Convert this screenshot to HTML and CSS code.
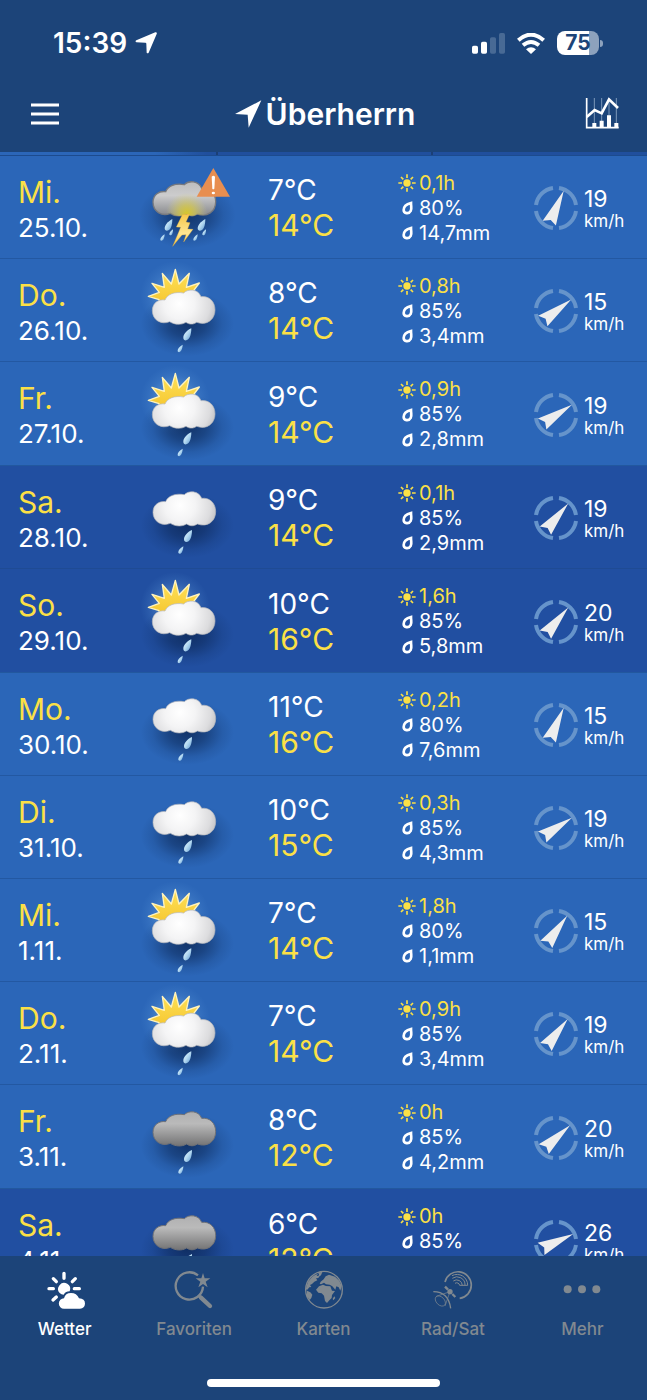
FILE: index.html
```html
<!DOCTYPE html>
<html lang="de">
<head>
    <meta charset="utf-8">
    <meta name="viewport" content="width=device-width, initial-scale=1">
    <title>Wetter Überherrn</title>
    <link rel="stylesheet" href="styles.css">
</head>
<body>
    <!-- shared icon shapes -->
    <svg class="defs" aria-hidden="true">
        <defs>
            <radialGradient id="cloudLight" gradientUnits="userSpaceOnUse" cx="150" cy="112" r="115">
                <stop offset="0" stop-color="#fff"/>
                <stop offset="0.4" stop-color="#f4f4f5"/>
                <stop offset="0.8" stop-color="#dcdcde"/>
                <stop offset="1" stop-color="#c0c0c3"/>
            </radialGradient>
            <linearGradient id="cloudDark" x1="0" y1="0" x2="0" y2="1">
                <stop offset="0" stop-color="#b0b0b1"/>
                <stop offset="0.35" stop-color="#bababa"/>
                <stop offset="1" stop-color="#737374"/>
            </linearGradient>
            <linearGradient id="cloudStorm" x1="0" y1="0" x2="0" y2="1">
                <stop offset="0" stop-color="#bdbdbd"/>
                <stop offset="0.4" stop-color="#cccccd"/>
                <stop offset="1" stop-color="#85868a"/>
            </linearGradient>
            <radialGradient id="flash" gradientUnits="userSpaceOnUse" cx="170" cy="166" r="62">
                <stop offset="0" stop-color="#d8c72c"/>
                <stop offset="0.4" stop-color="#d6c94a" stop-opacity="0.7"/>
                <stop offset="1" stop-color="#d6cf80" stop-opacity="0"/>
            </radialGradient>
            <radialGradient id="glow">
                <stop offset="0.4" stop-color="#8cc4f2" stop-opacity="0.4"/>
                <stop offset="0.7" stop-color="#6aa6e4" stop-opacity="0.18"/>
                <stop offset="1" stop-color="#5b9ade" stop-opacity="0"/>
            </radialGradient>
            <radialGradient id="shade">
                <stop offset="0" stop-color="#0a2450" stop-opacity="0.75"/>
                <stop offset="0.4" stop-color="#0a2450" stop-opacity="0.5"/>
                <stop offset="0.75" stop-color="#0a2450" stop-opacity="0.14"/>
                <stop offset="1" stop-color="#0a2450" stop-opacity="0"/>
            </radialGradient>
            <linearGradient id="sunFill" x1="0" y1="0" x2="0" y2="1">
                <stop offset="0" stop-color="#fde25a"/>
                <stop offset="1" stop-color="#f6c62f"/>
            </linearGradient>
            <linearGradient id="dropFill" x1="0" y1="0" x2="1" y2="1">
                <stop offset="0" stop-color="#eaf7ff"/>
                <stop offset="0.5" stop-color="#b4daf2"/>
                <stop offset="1" stop-color="#5d97cf"/>
            </linearGradient>
            <linearGradient id="boltFill" x1="0" y1="0" x2="0" y2="1">
                <stop offset="0" stop-color="#f6c648"/>
                <stop offset="0.6" stop-color="#ffe692"/>
                <stop offset="1" stop-color="#fcc437"/>
            </linearGradient>
        </defs>

        <symbol id="cloud" viewBox="0 0 360 300">
            <path d="M107 101C114 84 135 75 163 80C175 67 206 67 215 91C240 88 257 106 257 131C257 160 232 179 202 168C192 175 180 175 170 168C155 177 135 175 121 166C95 177 69 160 69 133C69 110 88 98 107 101Z"/>
        </symbol>
        <symbol id="rain" viewBox="0 0 360 300">
            <path d="M186 186C172 192 162 204 162 214C162 225 176 225 181 213C185 205 186 195 186 186Z" fill="url(#dropFill)"/>
            <path d="M160 235C150 240 145 248 145 253C145 259 153 259 156 252C159 247 160 240 160 235Z" fill="url(#dropFill)"/>
        </symbol>
        <symbol id="stormRain" viewBox="0 0 60 80">
            <path d="M38 3C24 11 15 22 15 31C15 41 28 40 33 30C37 22 38 12 38 3Z" fill="url(#dropFill)"/>
            <path d="M40 34C33 39 29 44 29 49C30 54 36 52 38 47C40 42 40 38 40 34Z" fill="url(#dropFill)"/>
            <path d="M15 49C7 54 2 60 2 65C3 70 9 68 12 63C14 58 15 53 15 49Z" fill="url(#dropFill)"/>
        </symbol>

        <symbol id="weather-rain" viewBox="0 0 360 300">
            <ellipse cx="172" cy="172" rx="140" ry="98" fill="url(#shade)"/>
            <use href="#cloud" fill="url(#cloudLight)" stroke="#b6b8bd" stroke-width="2"/>
            <use href="#rain"/>
        </symbol>
        <symbol id="weather-dark" viewBox="0 0 360 300">
            <ellipse cx="172" cy="172" rx="140" ry="98" fill="url(#shade)"/>
            <use href="#cloud" fill="url(#cloudDark)" stroke="#707277" stroke-width="3"/>
            <use href="#rain"/>
        </symbol>
        <symbol id="weather-sun" viewBox="0 0 360 300">
            <circle cx="135" cy="104" r="104" fill="url(#glow)"/>
            <ellipse cx="172" cy="188" rx="140" ry="98" fill="url(#shade)"/>
            <path d="M55 106L88 94L66 67L103 79L97 37L124 69L136 25L147 69L178 37L169 79L208 66L184 98L184 120L100 130L85 115Z" fill="url(#sunFill)" stroke="#fff3bd" stroke-width="4" stroke-linejoin="round"/>
            <g transform="translate(-2 16)">
                <use href="#cloud" fill="url(#cloudLight)" stroke="#b6b8bd" stroke-width="2"/>
                <use href="#rain"/>
            </g>
        </symbol>
        <symbol id="weather-storm" viewBox="0 0 360 300">
            <ellipse cx="172" cy="172" rx="145" ry="100" fill="url(#shade)"/>
            <use href="#cloud" fill="url(#cloudStorm)" stroke="#77797e" stroke-width="4"/>
            <use href="#cloud" fill="url(#flash)"/>
            <use href="#stormRain" x="89" y="180" width="60" height="80"/>
            <use href="#stormRain" x="188" y="180" width="60" height="80"/>
            <path d="M157 170L179 168L168 192L180 194L173 213L189 214L161 252L168 230L156 231L128 265L145 225L152 208L139 207Z" fill="url(#boltFill)" stroke="#e9b034" stroke-width="1"/>
            <path d="M250 30L300 116H200Z" fill="#e88e50"/>
            <path d="M245 56Q250 50 255 56L253 92Q250 95 247 92Z" fill="#fff"/>
            <ellipse cx="250" cy="105" rx="5" ry="4" fill="#fff"/>
        </symbol>

        <symbol id="sunshine" viewBox="0 0 54 54">
            <circle cx="27" cy="27" r="11" fill="currentColor"/>
            <path d="M27 1V12M27 42V53M1 27H12M42 27H53M9 9L16 16M38 38L45 45M45 9L38 16M16 38L9 45" stroke="currentColor" stroke-width="5"/>
        </symbol>
        <symbol id="drop" viewBox="0 0 54 54">
            <path d="M39 12C39 24 42 29 38 36C33 46 17 44 17 33C17 22 27 15 39 12Z" fill="none" stroke="currentColor" stroke-width="8"/>
        </symbol>
        <symbol id="ring" viewBox="-22 -22 44 44">
            <path d="M3 -20A20 20 0 0 1 20 -3M20 3A20 20 0 0 1 3 20M-3 20A20 20 0 0 1 -20 3M-20 -3A20 20 0 0 1 -3 -20" fill="none" stroke="#6694cb" stroke-width="4"/>
        </symbol>
    </svg>

    <header class="top">
        <div class="status">
            <span class="time">15:39
                <svg width="22" height="22" viewBox="0 0 66 66" aria-hidden="true"><path d="M61 1Q67 0 65 6L41 62Q38 66 35 62L34 35Q34 32 31 32L4 31Q-1 28 4 25Z" fill="#fff"/></svg>
            </span>
            <span class="signals">
                <svg width="33" height="21" viewBox="0 0 99 63" aria-hidden="true">
                    <rect x="0" y="38" width="18" height="24" rx="5" fill="#fff"/>
                    <rect x="27" y="26" width="18" height="36" rx="5" fill="#fff"/>
                    <rect x="54" y="13" width="18" height="49" rx="5" fill="#486a95"/>
                    <rect x="81" y="0" width="18" height="62" rx="5" fill="#486a95"/>
                </svg>
                <svg width="28" height="21" viewBox="0 0 84 63" aria-hidden="true">
                    <path d="M4 22Q42 -12 80 22M18 37Q42 17 66 37" fill="none" stroke="#fff" stroke-width="12"/>
                    <path d="M27 49Q42 37 57 49L42 63Z" fill="#fff"/>
                </svg>
                <span class="battery">75</span>
            </span>
        </div>
        <div class="titlebar">
            <button class="icon-button" type="button" aria-label="Menü">
                <svg width="28" height="22" viewBox="0 0 28 22"><path d="M0 2H28M0 11H28M0 20H28" stroke="#fff" stroke-width="3"/></svg>
            </button>
            <h1>
                <svg width="27" height="28" viewBox="0 0 81 84" aria-hidden="true"><path d="M79 1L41 83L38 44L0 42Z" fill="#fff"/></svg>
                Überherrn
            </h1>
            <button class="icon-button" type="button" aria-label="Diagramm">
                <svg width="34" height="34" viewBox="0 0 102 102">
                    <path d="M28 3V92M50 3V92M72 3V92M94 3V92" stroke="#7c98ba" stroke-width="3"/>
                    <path d="M5 3V92H101" fill="none" stroke="#fff" stroke-width="5"/>
                    <path d="M22 78H34V92H22ZM44 71H56V92H44ZM66 55H78V92H66ZM88 78H100V92H88Z" fill="#fff"/>
                    <path d="M5 60L29 39L50 49L72 7L99 33" fill="none" stroke="#fff" stroke-width="8"/>
                </svg>
            </button>
        </div>
    </header>

    <main class="forecast">
        <div class="previous"><span></span><span></span><span></span></div>
        <div id="days"></div>
    </main>

    <nav class="tabs">
        <ul>
            <li><a class="active" href="#wetter">
                <svg viewBox="0 0 120 120" aria-hidden="true">
                    <path d="M57 10V25M12 56H25M88 56H103M25 26L34 35M91 26L82 35M24 90L34 81" stroke="currentColor" stroke-width="10" stroke-linecap="round"/>
                    <path d="M44 69A18 18 0 1 1 74 64Q62 64 56 74Q49 74 44 69Z" fill="currentColor"/>
                    <path d="M57 116A15 15 0 0 1 57 85Q61 69 78 69Q95 69 102 85Q120 86 120 101Q119 115 105 116Z" fill="currentColor"/>
                </svg>
                Wetter</a></li>
            <li><a href="#favoriten">
                <svg viewBox="0 0 120 120" aria-hidden="true">
                    <path d="M72 16A41 41 0 1 0 87 50" fill="none" stroke="currentColor" stroke-width="7"/>
                    <path d="M74 77L82 84" stroke="currentColor" stroke-width="9"/>
                    <path d="M81 83L108 108" stroke="currentColor" stroke-width="13" stroke-linecap="round"/>
                    <path d="M87 9L92 25L109 25L95 35L101 52L87 42L73 52L79 35L65 25L82 25Z" fill="currentColor"/>
                </svg>
                Favoriten</a></li>
            <li><a href="#karten">
                <svg viewBox="0 0 120 120" aria-hidden="true">
                    <circle cx="60" cy="59" r="55" fill="none" stroke="currentColor" stroke-width="4"/>
                    <path d="M12 35L24 21L34 14L42 12L38 18L47 17L43 24L36 25L40 31L31 35L24 42L18 45L22 51L16 52L10 59L5 58Z" fill="currentColor"/>
                    <path d="M9 62L19 67L25 74L22 84L17 90L9 79Z" fill="currentColor"/>
                    <path d="M41 7L55 6L51 16L43 21L45 13Z" fill="currentColor"/>
                    <path d="M50 35L59 28L65 19L75 14L93 20L106 32L113 48L109 62L104 52L97 49L94 59L85 49L77 44L66 43L60 38L51 43L47 41Z" fill="currentColor"/>
                    <path d="M45 49L57 44L66 48L79 49L84 62L93 63L84 75L83 84L76 91L69 99L63 93L60 77L53 70L43 68L36 59Z" fill="currentColor"/>
                    <path d="M91 79L94 84L88 91L86 86Z" fill="currentColor"/>
                </svg>
                Karten</a></li>
            <li><a href="#radsat">
                <svg viewBox="0 0 120 120" aria-hidden="true">
                    <g fill="none" stroke="currentColor">
                        <path d="M36 36A40 40 0 1 1 80 85" stroke-width="5"/>
                        <path d="M57 17A32 32 0 0 1 104 46M58 25A24 24 0 0 1 96 46M61 33A17 17 0 0 1 88 46M66 40A9 9 0 0 1 80 46H104" stroke-width="3"/>
                        <path d="M1 65Q46 65 53 115" stroke-width="4"/>
                        <ellipse cx="22" cy="93" rx="18" ry="12" transform="rotate(45 22 93)" stroke-width="2"/>
                        <path d="M51 65L10 79M51 65L36 108" stroke-width="2"/>
                        <path d="M36 50L45 59M58 72L67 81" stroke-width="7"/>
                    </g>
                    <circle cx="51" cy="65" r="8" fill="currentColor"/>
                </svg>
                Rad/Sat</a></li>
            <li><a href="#mehr">
                <svg viewBox="0 0 120 120" aria-hidden="true">
                    <circle cx="17" cy="58" r="12" fill="currentColor"/>
                    <circle cx="60" cy="58" r="12" fill="currentColor"/>
                    <circle cx="103" cy="58" r="12" fill="currentColor"/>
                </svg>
                Mehr</a></li>
        </ul>
        <div class="home-bar"></div>
    </nav>

    <script src="script.js"></script>
</body>
</html>
```

FILE: styles.css
```css
* {
    box-sizing: border-box;
}

body {
    margin: 0;
    height: 100vh;
    display: flex;
    flex-direction: column;
    background-color: #1c4479;
    color: #fff;
    font-family: Inter, "Liberation Sans", sans-serif;
}

svg {
    display: block;
    flex: none;
}

.defs {
    position: absolute;
    width: 0;
    height: 0;
}

/* status bar and title */
.top {
    flex: none;
    padding-bottom: 8px;
}

.status {
    display: flex;
    justify-content: space-between;
    align-items: center;
    padding: 26px 44px 0 53px;
    height: 60px;
}

.time {
    display: flex;
    align-items: center;
    gap: 8px;
    font-size: 28px;
    font-weight: 600;
}

.signals {
    display: flex;
    align-items: center;
    gap: 12px;
}

.battery {
    position: relative;
    width: 42px;
    height: 24px;
    margin-right: 4px;
    border-radius: 8px;
    background: linear-gradient(to right, #fff 75%, #8da2bd 75%);
    color: #1c4479;
    font-size: 21px;
    line-height: 24px;
    font-weight: 700;
    text-align: center;
}

.battery::after {
    content: "";
    position: absolute;
    left: 43px;
    top: 9px;
    width: 3px;
    height: 7px;
    border-radius: 0 4px 4px 0;
    background-color: #8da2bd;
}

.titlebar {
    display: grid;
    grid-template-columns: 1fr auto 1fr;
    align-items: center;
    height: 84px;
    padding: 24px 28px 0 31px;
}

.titlebar h1 {
    display: flex;
    align-items: center;
    gap: 4px;
    margin: 0;
    font-size: 30px;
    line-height: 36px;
    font-weight: 600;
}

.icon-button {
    padding: 0;
    border: none;
    background: none;
    cursor: pointer;
}

.icon-button:last-child {
    justify-self: end;
}

.icon-button:first-child {
    justify-self: start;
}

/* day list */
.forecast {
    flex: 1;
    min-height: 0;
    overflow: hidden;
}

/* lower edge of the hourly row scrolled under the title */
.previous {
    display: grid;
    grid-template-columns: repeat(3, 1fr);
    height: 4px;
    border-bottom: 1px solid #1c4b8e;
    background: linear-gradient(to right, #2b66b8 24%, #204f9d 32%);
}

.previous span + span {
    border-left: 2px solid #1b3f76;
}

.week {
    margin: 0;
    padding: 0;
    list-style: none;
    background-color: #2b66b8;
}

.week + .week {
    border-top: 1px solid #22589f;
}

.weekend {
    background-color: #214fa1;
}

.day {
    display: grid;
    grid-template-columns: 112fr 138fr 130fr 136fr 113fr;
    align-items: center;
    height: 103px;
    padding: 2px 0 0 18px;
    overflow: hidden;
}

.day:not(:last-child) {
    border-bottom: 1px solid #2358a2;
}

.weekend .day:not(:last-child) {
    border-color: #1f4b94;
}

.date,
.temps {
    line-height: 35px;
}

.date {
    padding-top: 3px;
    font-size: 26px;
}

.weekday,
.max {
    display: block;
    color: #fbe046;
    font-size: 30px;
}

.min {
    display: block;
    font-size: 28px;
}

.weather {
    width: 120px;
    height: 100px;
}

.details {
    margin: 0;
    padding: 0;
    list-style: none;
    font-size: 20px;
    line-height: 25px;
}

.details li {
    display: flex;
    align-items: center;
    gap: 3px;
    min-height: 25px;
}

.details svg {
    width: 18px;
    height: 18px;
}

.sunshine {
    color: #fbe046;
}

.wind {
    display: flex;
    align-items: center;
    gap: 6px;
    font-size: 17px;
    line-height: 22px;
}

.wind svg {
    width: 44px;
    height: 44px;
}

.wind div {
    padding-top: 4px;
}

.speed {
    display: block;
    font-size: 23px;
}

/* bottom tabs */
.tabs {
    flex: none;
    display: flex;
    flex-direction: column;
    align-items: center;
    justify-content: space-between;
    height: 144px;
    padding: 14px 0 13px;
}

.tabs ul {
    display: flex;
    width: 100%;
    margin: 0;
    padding: 0;
    list-style: none;
}

.tabs li {
    flex: 1;
}

.tabs a {
    display: flex;
    flex-direction: column;
    align-items: center;
    gap: 9px;
    color: #818990;
    font-size: 17px;
    line-height: 20px;
    font-weight: 500;
    text-decoration: none;
}

.tabs a.active {
    color: #fff;
}

.tabs svg {
    width: 40px;
    height: 40px;
    overflow: visible;
}

.home-bar {
    width: 36%;
    height: 8px;
    border-radius: 4px;
    background-color: #fff;
}
```

FILE: script.js
```js
// one array per block of weekdays or weekend days
// [day, date, icon, min, max, sunshine, probability, rain, wind, direction]
const weeks = [
    [
        ['Mi.', '25.10.', 'storm', 7, 14, '0,1h', '80%', '14,7mm', 19, 24],
        ['Do.', '26.10.', 'sun', 8, 14, '0,8h', '85%', '3,4mm', 15, 53],
        ['Fr.', '27.10.', 'sun', 9, 14, '0,9h', '85%', '2,8mm', 19, 57]
    ],
    [
        ['Sa.', '28.10.', 'rain', 9, 14, '0,1h', '85%', '2,9mm', 19, 40],
        ['So.', '29.10.', 'sun', 10, 16, '1,6h', '85%', '5,8mm', 20, 40]
    ],
    [
        ['Mo.', '30.10.', 'rain', 11, 16, '0,2h', '80%', '7,6mm', 15, 24],
        ['Di.', '31.10.', 'rain', 10, 15, '0,3h', '85%', '4,3mm', 19, 57],
        ['Mi.', '1.11.', 'sun', 7, 14, '1,8h', '80%', '1,1mm', 15, 36],
        ['Do.', '2.11.', 'sun', 7, 14, '0,9h', '85%', '3,4mm', 19, 38],
        ['Fr.', '3.11.', 'dark', 8, 12, '0h', '85%', '4,2mm', 20, 48]
    ],
    [
        ['Sa.', '4.11.', 'dark', 6, 12, '0h', '85%', '', 26, 65]
    ]
];

function renderDay([day, date, icon, min, max, sunshine, chance, rain, wind, direction]) {
    return `
        <li class="day">
            <div class="date"><span class="weekday">${day}</span>${date}</div>
            <svg class="weather" aria-hidden="true"><use href="#weather-${icon}"/></svg>
            <div class="temps"><span class="min">${min}°C</span><span class="max">${max}°C</span></div>
            <ul class="details">
                <li class="sunshine"><svg><use href="#sunshine"/></svg>${sunshine}</li>
                <li><svg><use href="#drop"/></svg>${chance}</li>
                <li><svg><use href="#drop"/></svg>${rain}</li>
            </ul>
            <div class="wind">
                <svg viewBox="-22 -22 44 44" aria-hidden="true">
                    <use href="#ring" x="-22" y="-22" width="44" height="44"/>
                    <path d="M0 -19L7 16L0 13L-7 17Z" fill="#ededed" transform="rotate(${direction})"/>
                </svg>
                <div><span class="speed">${wind}</span>km/h</div>
            </div>
        </li>`;
}

document.getElementById('days').innerHTML = weeks.map(days => {
    const weekend = days[0][0] === 'Sa.' ? ' weekend' : '';
    return `<ul class="week${weekend}">${days.map(renderDay).join('')}</ul>`;
}).join('');
```
